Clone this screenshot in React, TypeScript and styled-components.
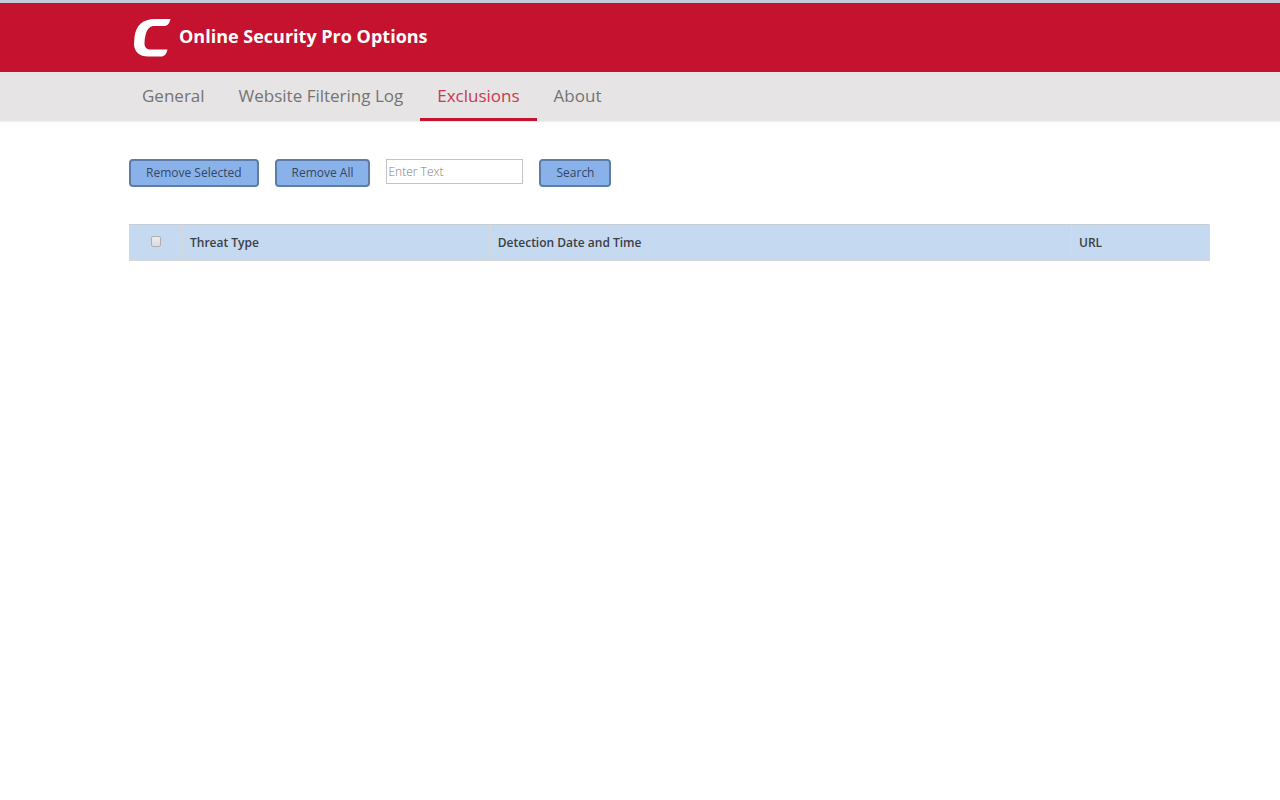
import React from "react";
import styled, { createGlobalStyle } from "styled-components";

const GlobalStyle = createGlobalStyle`
  *, *::before, *::after { box-sizing: border-box; }
  body {
    margin: 0;
    background: #fff;
    color: #3b4045;
    font-family: "Open Sans", "Noto Sans", sans-serif;
    font-size: 12px;
  }
`;

const Header = styled.header`
  display: flex;
  align-items: center;
  gap: 8px;
  height: 72px;
  padding: 0 70px 0 133px;
  border-top: 3px solid #c3cbdd;
  background: #c4122f;
`;

const Logo = styled.svg`
  display: block;
  width: 38px;
  height: 40px;
`;

const Title = styled.h1`
  margin: 0;
  padding-bottom: 4px;
  color: #fff;
  font-size: 18px;
  font-weight: 700;
  line-height: 24px;
`;

const Nav = styled.nav`
  display: flex;
  height: 50px;
  padding: 0 70px 0 125px;
  background: #e6e4e5;
  border-bottom: 1px solid #efeeee;
`;

const Tab = styled.a<{ $active?: boolean }>`
  padding: 12px 17px 0;
  border-bottom: 3px solid ${(p) => (p.$active ? "#c4122f" : "transparent")};
  color: ${(p) => (p.$active ? "#c93a50" : "#747474")};
  font-size: 17px;
  line-height: 24px;
  text-decoration: none;
  white-space: nowrap;
`;

const Main = styled.main`
  padding: 37px 70px 0 129px;
`;

const Toolbar = styled.form`
  display: flex;
  align-items: flex-start;
  gap: 16px;
  margin-bottom: 37px;
`;

const Button = styled.button`
  height: 28px;
  padding: 0 15px;
  border: 2px solid #5f7ca6;
  border-radius: 4px;
  background: #8ab2ea;
  color: #34475f;
  font: inherit;
  line-height: 24px;
  white-space: nowrap;
`;

const SearchBox = styled.input`
  width: 137px;
  height: 25px;
  padding: 0 1px;
  border: 1px solid #c3c3c3;
  border-radius: 0;
  background: #fff;
  color: #3b4045;
  font: inherit;
  &::placeholder { color: #7c7c7c; font-weight: 300; opacity: 1; }
`;

const Table = styled.table`
  width: 100%;
  border-collapse: collapse;
  table-layout: fixed;
`;

const HeadCell = styled.th<{ $width?: string }>`
  width: ${(p) => p.$width ?? "auto"};
  height: 36px;
  padding: 0 7px;
  border: 1px solid #d8d8da;
  border-top-color: #c6ccd4;
  background: #c5d9f1;
  font-size: 12px;
  font-weight: 600;
  line-height: 16px;
  text-align: left;
`;

const CheckCell = styled(HeadCell)`
  padding: 0 0 4px;
  text-align: center;
`;

const Checkbox = styled.input`
  appearance: none;
  display: inline-block;
  width: 10px;
  height: 11px;
  margin: 0;
  border: 1px solid #b0b0b0;
  border-radius: 2px;
  background: linear-gradient(#ececec, #dcdcdc);
  vertical-align: middle;
  &:checked { background: #5c7ba8; }
`;

const tabs = ["General", "Website Filtering Log", "Exclusions", "About"];

export default function App() {
  return (
    <>
      <GlobalStyle />
      <Header>
        <Logo viewBox="0 0 38 40" aria-hidden="true">
          <path
            fill="#fff"
            d="M37.5 1H22C10 1 3 7 1.5 19L1 26C1 34 7 38.500 15 38.500H28C31.500 38.500 33.500 36 34.500 31.500H18C14 31.500 11.500 29.500 11.500 25.500C11.500 22 12 19 13 15.500C14.500 10.500 17 8 21.500 8H31C34.500 8 36.500 5.500 37.500 1Z"
          />
        </Logo>
        <Title>Online Security Pro Options</Title>
      </Header>
      <Nav aria-label="Options">
        {tabs.map((name) => (
          <Tab
            key={name}
            href="#"
            $active={name === "Exclusions"}
            aria-current={name === "Exclusions" ? "page" : undefined}
          >
            {name}
          </Tab>
        ))}
      </Nav>
      <Main>
        <Toolbar onSubmit={(e) => e.preventDefault()}>
          <Button type="button">Remove Selected</Button>
          <Button type="button">Remove All</Button>
          <SearchBox type="text" placeholder="Enter Text" aria-label="Search exclusions" />
          <Button type="submit">Search</Button>
        </Toolbar>
        <Table>
          <thead>
            <tr>
              <CheckCell $width="53px">
                <Checkbox type="checkbox" aria-label="Select all" />
              </CheckCell>
              <HeadCell $width="28.5%">Threat Type</HeadCell>
              <HeadCell>Detection Date and Time</HeadCell>
              <HeadCell $width="138px">URL</HeadCell>
            </tr>
          </thead>
        </Table>
      </Main>
    </>
  );
}
